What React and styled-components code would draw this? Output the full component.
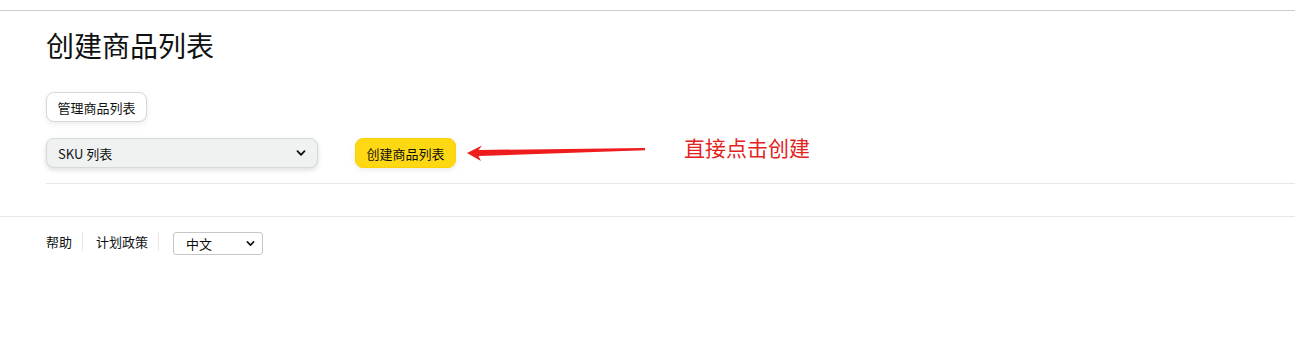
import React from 'react';
import styled, { createGlobalStyle } from 'styled-components';

const GlobalStyle = createGlobalStyle`
  body {
    margin: 0;
    background: #fff;
    font-family: 'Noto Sans CJK SC', 'Noto Sans', Arial, sans-serif;
    color: #0f1111;
  }
`;

const TopBar = styled.div`
  height: 10px;
  border-bottom: 1px solid #cccccc;
`;

const Main = styled.main`
  padding: 16px 0 0 46px;
`;

const Title = styled.h1`
  margin: 0;
  font-size: 28px;
  font-weight: 400;
  line-height: 36px;
  color: #0f1111;
`;

const Button = styled.button`
  height: 30px;
  padding: 0 10.5px;
  border-radius: 8px;
  font-family: inherit;
  font-size: 13px;
  color: #0f1111;
  cursor: pointer;
  border: 1px solid ${p => (p.$primary ? '#fcd200' : '#d5d9d9')};
  background: ${p => (p.$primary ? '#ffd814' : '#fff')};
  box-shadow: 0 2px 5px rgba(213, 217, 217, 0.5);
`;

const ManageRow = styled.div`
  margin-top: 29px;
`;

const ActionRow = styled.div`
  display: flex;
  align-items: center;
  margin-top: 16px;
  padding-bottom: 15px;
  border-bottom: 1px solid #e7e7e7;
`;

const SelectBox = styled.div`
  width: 272px;
  height: 30px;
  box-sizing: border-box;
  display: flex;
  align-items: center;
  justify-content: space-between;
  padding: 0 11px;
  background: #f0f2f2;
  border: 1px solid #d5d9d9;
  border-radius: 8px;
  box-shadow: 0 2px 5px rgba(15, 17, 17, 0.15);
  font-size: 13px;
`;

const Arrow = styled.svg`
  margin-left: 7px;
  flex: none;
`;

const Note = styled.span`
  margin-left: 38px;
  font-size: 21px;
  color: #e3231d;
  position: relative;
  top: -6px;
`;

const Footer = styled.footer`
  margin-top: 32px;
  border-top: 1px solid #e7e7e7;
  padding: 15px 0 0 46px;
  display: flex;
  align-items: flex-start;
  font-size: 13px;
`;

const FootLink = styled.a`
  color: #0f1111;
  text-decoration: none;
  padding-right: 10px;
  margin-right: 13px;
  border-right: 1px solid #e7e7e7;
  line-height: 19px;
`;

const LangSelect = styled.div`
  width: 90px;
  height: 23px;
  box-sizing: border-box;
  border: 1px solid #c7c7c7;
  border-radius: 3px;
  display: flex;
  align-items: center;
  justify-content: space-between;
  padding: 0 7px 0 12px;
  font-size: 13px;
  margin-left: 1px;
`;

function Chevron({ size = 10 }) {
  return (
    <svg width={size} height={size} viewBox="0 0 10 10">
      <path d="M1.5 3.2 L5 6.8 L8.5 3.2" fill="none" stroke="#0f1111" strokeWidth="1.8" strokeLinecap="round" strokeLinejoin="round" />
    </svg>
  );
}

export default function App() {
  return (
    <>
      <GlobalStyle />
      <TopBar />
      <Main>
        <Title>创建商品列表</Title>
        <ManageRow>
          <Button>管理商品列表</Button>
        </ManageRow>
        <ActionRow>
          <SelectBox>
            <span>SKU 列表</span>
            <Chevron />
          </SelectBox>
          <Button $primary style={{ marginLeft: 37 }}>创建商品列表</Button>
          <Arrow width="183" height="20" viewBox="0 0 183 20">
            <polygon points="4,10 19,2.5 15.5,7 182,5 182,7.2 15.5,13 18,18" fill="#ee1c1c" />
          </Arrow>
          <Note>直接点击创建</Note>
        </ActionRow>
      </Main>
      <Footer>
        <FootLink href="#">帮助</FootLink>
        <FootLink href="#">计划政策</FootLink>
        <LangSelect>
          <span>中文</span>
          <Chevron size={9} />
        </LangSelect>
      </Footer>
    </>
  );
}
